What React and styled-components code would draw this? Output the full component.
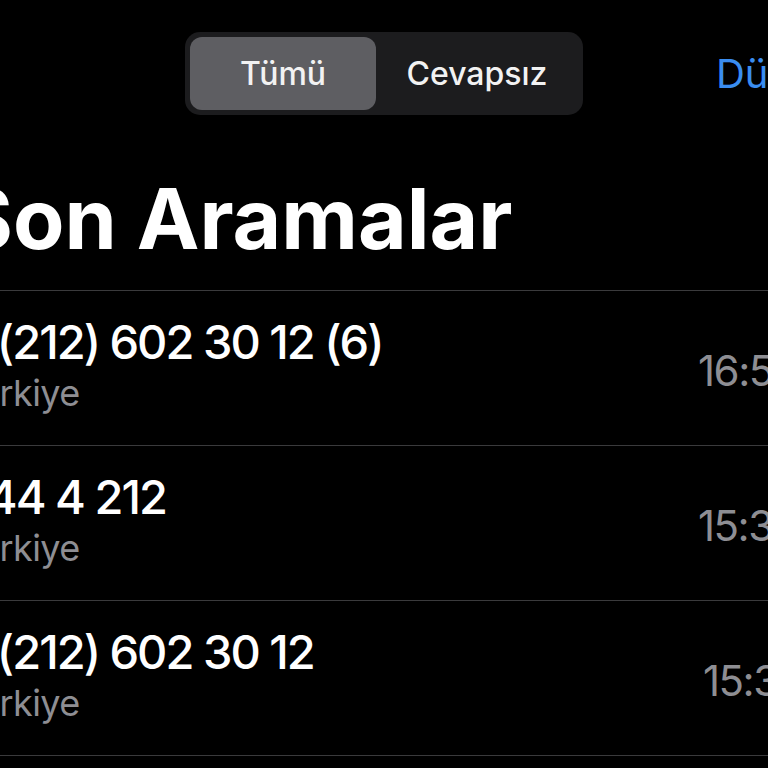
import React from 'react';
import styled, { createGlobalStyle } from 'styled-components';

const GlobalStyle = createGlobalStyle`
  html, body {
    margin: 0;
    padding: 0;
    background: #000;
    overflow: hidden;
  }
  body {
    font-family: Inter, "Noto Sans", "Liberation Sans", sans-serif;
    color: #fff;
  }
`;

const Screen = styled.div`
  width: 768px;
  height: 768px;
  overflow: hidden;
  background: #000;
`;

const Canvas = styled.div`
  width: 920px;
  margin-left: -42px;
`;

const Header = styled.div`
  display: flex;
  align-items: center;
  padding-top: 32px;
  padding-left: 227px;
`;

const Segmented = styled.div`
  display: flex;
  width: 398px;
  height: 83px;
  box-sizing: border-box;
  padding: 5px;
  background: #1c1c1e;
  border-radius: 15px;
`;

const Segment = styled.div`
  flex: ${(p) => (p.$active ? '0 0 186px' : '1')};
  display: flex;
  align-items: center;
  justify-content: center;
  border-radius: 12px;
  font-size: 32px;
  font-weight: 500;
  color: #f2f2f2;
  background: ${(p) => (p.$active ? '#5e5e62' : 'transparent')};
`;

const EditButton = styled.div`
  margin-left: 133px;
  font-size: 40px;
  color: #3a8df0;
  white-space: nowrap;
`;

const Title = styled.h1`
  margin: 0;
  padding: 54px 0 0 0;
  font-size: 84px;
  font-weight: 700;
  line-height: 1.2;
  color: #fff;
`;

const List = styled.div`
  margin-top: 20px;
  border-top: 1.5px solid #3a3a3c;
`;

const Row = styled.div`
  display: flex;
  align-items: center;
  height: 154px;
  border-bottom: 1.5px solid #3a3a3c;
`;

const Info = styled.div`
  flex: 1;
  display: flex;
  flex-direction: column;
  padding-bottom: 6px;
`;

const Number = styled.div`
  font-size: 47px;
  font-weight: 500;
  letter-spacing: -2px;
  line-height: 56px;
  color: #fff;
  white-space: nowrap;
`;

const Place = styled.div`
  font-size: 36px;
  letter-spacing: -0.6px;
  line-height: 46px;
  color: #8e8e93;
`;

const Time = styled.div`
  width: ${(p) => 180 - p.$shift}px;
  padding-left: ${(p) => p.$shift}px;
  padding-top: 6px;
  font-size: 42px;
  letter-spacing: -1.5px;
  color: #8e8e93;
  white-space: nowrap;
`;

const calls = [
  { number: '0 (212) 602 30 12 (6)', place: 'Türkiye', time: '16:58', shift: 0 },
  { number: '444 4 212', place: 'Türkiye', time: '15:38', shift: 0 },
  { number: '0 (212) 602 30 12', place: 'Türkiye', time: '15:36', shift: 5 },
];

export default function App() {
  return (
    <Screen>
      <GlobalStyle />
      <Canvas>
        <Header>
          <Segmented>
            <Segment $active>Tümü</Segment>
            <Segment>Cevapsız</Segment>
          </Segmented>
          <EditButton>Düzenle</EditButton>
        </Header>
        <Title>Son Aramalar</Title>
        <List>
          {calls.map((c, i) => (
            <Row key={i}>
              <Info>
                <Number>{c.number}</Number>
                <Place>{c.place}</Place>
              </Info>
              <Time $shift={c.shift}>{c.time}</Time>
            </Row>
          ))}
        </List>
      </Canvas>
    </Screen>
  );
}
